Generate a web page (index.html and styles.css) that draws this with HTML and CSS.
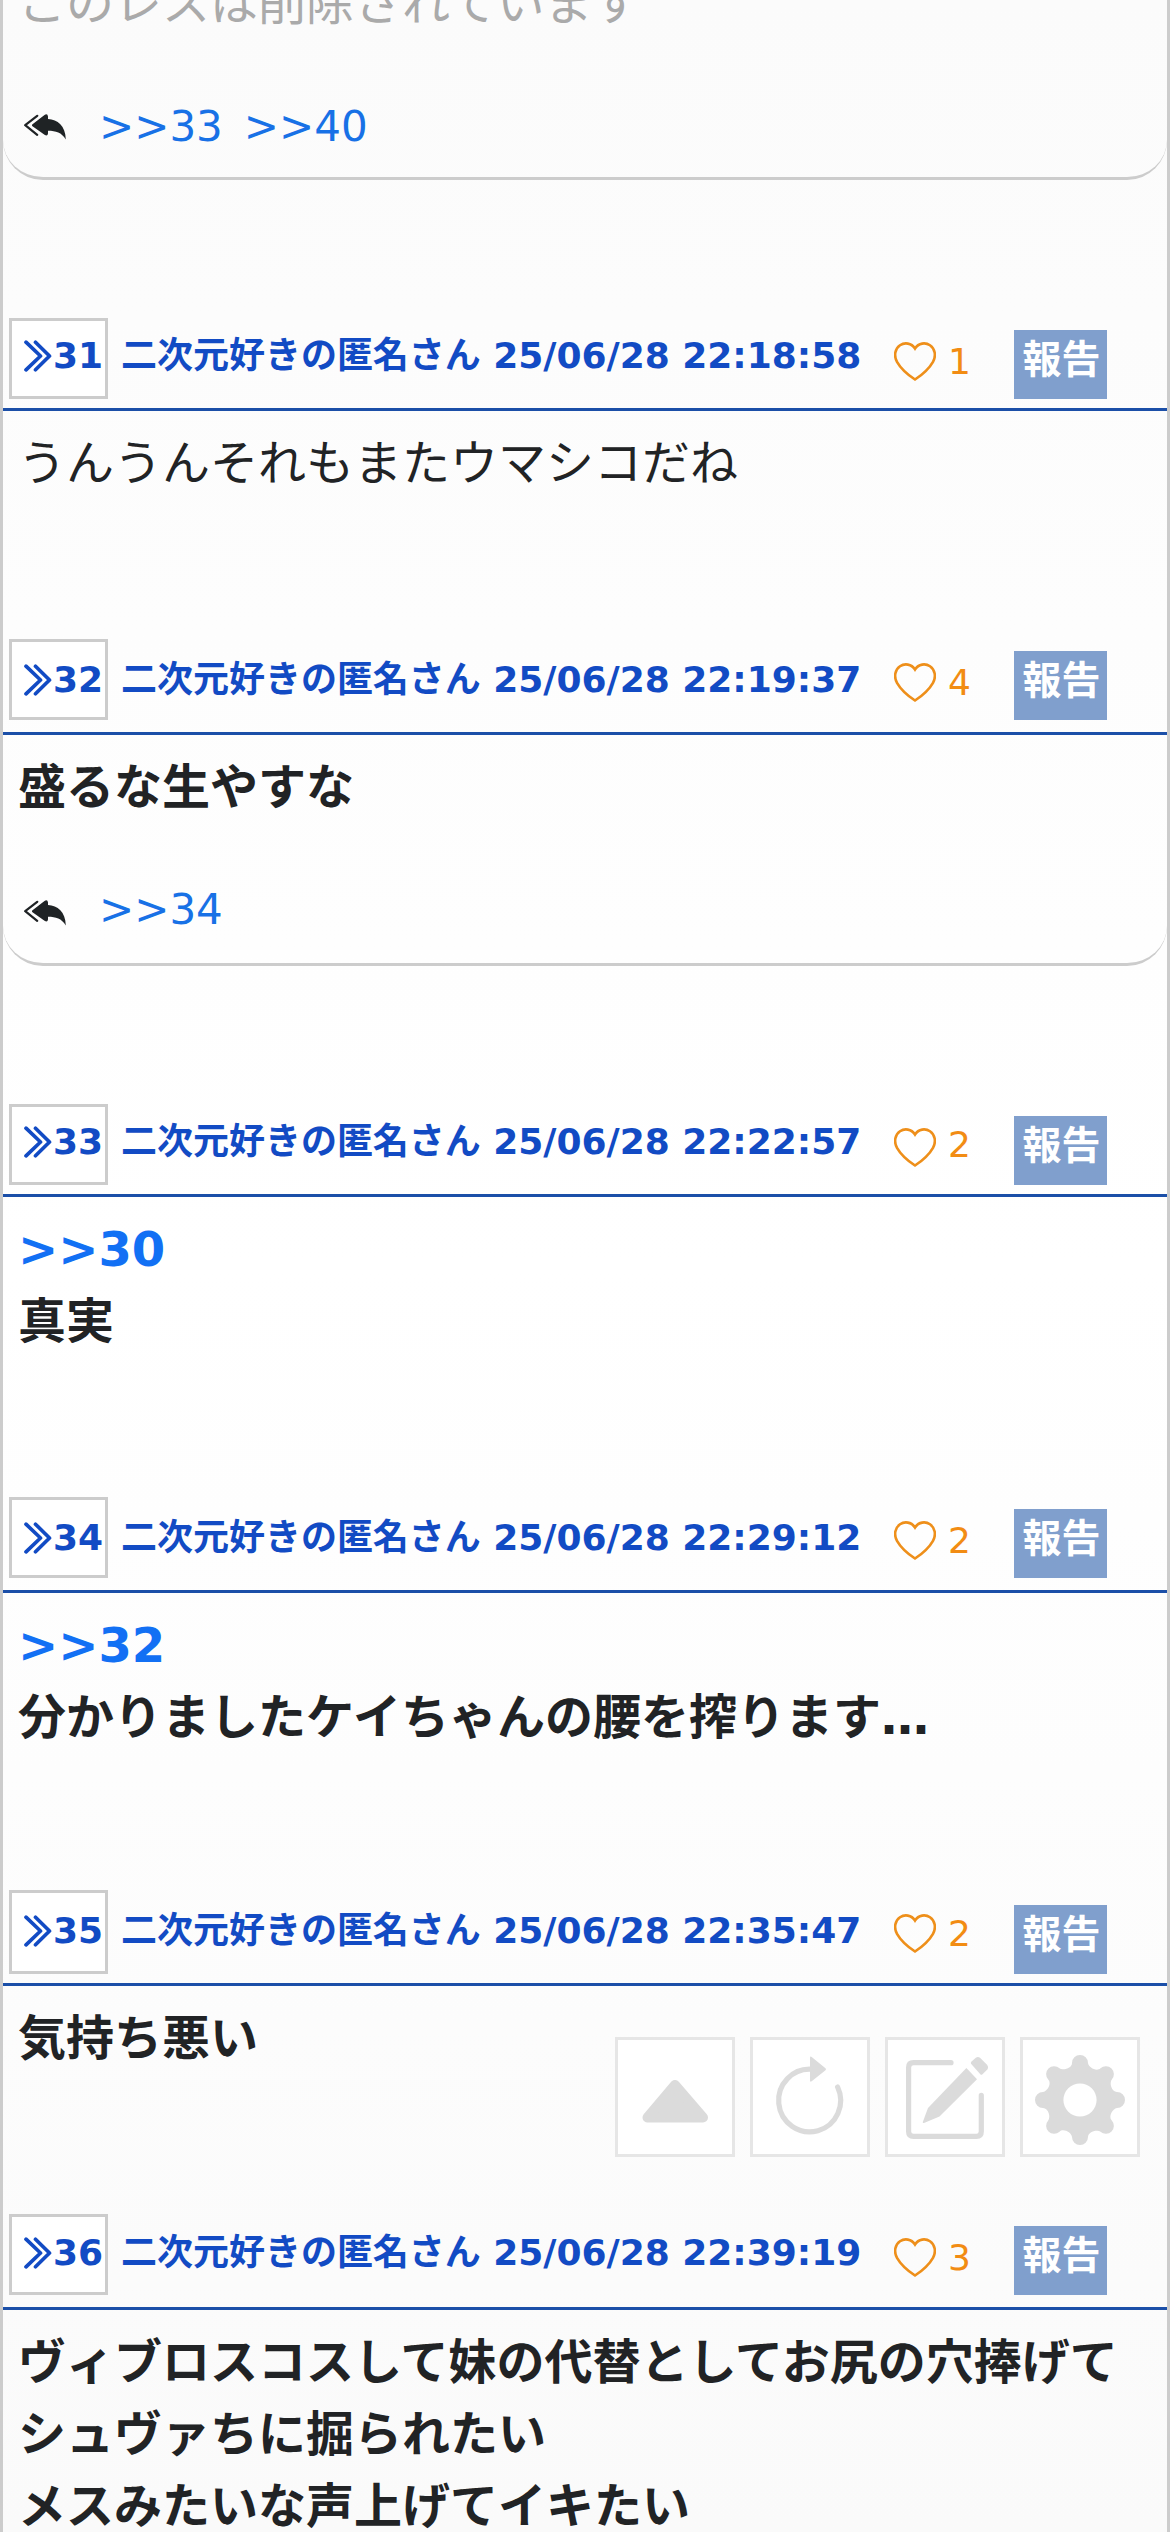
FILE: index.html
```html
<!DOCTYPE html>
<html lang="ja">
<head>
<meta charset="utf-8">
<title>二次元好きの匿名さん</title>
<link rel="stylesheet" href="styles.css">
</head>
<body>
<svg class="sprite" aria-hidden="true">
  <symbol id="chevrons" viewBox="0 0 28 32"><path d="M2 2.200 16.500 16 2 29.800M11.500 2.200 25.500 16 11.500 29.800"/></symbol>
  <symbol id="heart" viewBox="0 0 42 40"><path d="M21 6.500C17.500.8 10.500.2 6 3.300 1 6.800-.4 13.800 3 19.800 6.500 26 13.500 32.500 21 37.500 28.500 32.500 35.500 26 39 19.800 42.400 13.800 41 6.800 36 3.300 31.500.2 24.500.8 21 6.500Z"/></symbol>
  <symbol id="replies" viewBox="0 0 42 26"><path class="thin" d="M13.200 1.800 1.200 11.200 13.200 20.800"/><path d="M8.500 10.300 20.500.9Q23.600-.8 24 2.500V5C33.500 5.500 41.500 11.500 41.800 25.500 37.500 18.500 32 16.800 24 16.800V19.500Q23.600 22.600 20.500 20.800L8.500 12.200Q7.300 11.200 8.500 10.300Z"/></symbol>
</svg>
<main class="thread">
  <article class="post">
    <div class="body deleted">このレスは削除されています</div>
    <footer class="replies first"><svg class="reply-icon"><use href="#replies"/></svg><a>&gt;&gt;33</a><a>&gt;&gt;40</a></footer>
  </article>
  <article class="post">
    <header class="head raised">
      <span class="number"><svg class="chevrons"><use href="#chevrons"/></svg>31</span>
      <span class="name">二次元好きの匿名さん 25/06/28 22:18:58</span>
      <span class="like low-count"><svg class="heart"><use href="#heart"/></svg><span class="count">1</span></span>
      <span class="report">報告</span>
    </header>
    <div class="body plain">うんうんそれもまたウマシコだね</div>
  </article>
  <article class="post">
    <header class="head">
      <span class="number"><svg class="chevrons"><use href="#chevrons"/></svg>32</span>
      <span class="name">二次元好きの匿名さん 25/06/28 22:19:37</span>
      <span class="like"><svg class="heart"><use href="#heart"/></svg><span class="count">4</span></span>
      <span class="report">報告</span>
    </header>
    <div class="body">盛るな生やすな</div>
    <footer class="replies"><svg class="reply-icon"><use href="#replies"/></svg><a>&gt;&gt;34</a></footer>
  </article>
  <article class="post">
    <header class="head raised">
      <span class="number"><svg class="chevrons"><use href="#chevrons"/></svg>33</span>
      <span class="name">二次元好きの匿名さん 25/06/28 22:22:57</span>
      <span class="like"><svg class="heart"><use href="#heart"/></svg><span class="count">2</span></span>
      <span class="report">報告</span>
    </header>
    <div class="body"><a>&gt;&gt;30</a><br>真実</div>
  </article>
  <article class="post">
    <header class="head">
      <span class="number"><svg class="chevrons"><use href="#chevrons"/></svg>34</span>
      <span class="name">二次元好きの匿名さん 25/06/28 22:29:12</span>
      <span class="like"><svg class="heart"><use href="#heart"/></svg><span class="count">2</span></span>
      <span class="report">報告</span>
    </header>
    <div class="body compact"><a>&gt;&gt;32</a><br>分かりましたケイちゃんの腰を搾ります…</div>
  </article>
  <article class="post">
    <header class="head raised tall">
      <span class="number"><svg class="chevrons"><use href="#chevrons"/></svg>35</span>
      <span class="name">二次元好きの匿名さん 25/06/28 22:35:47</span>
      <span class="like"><svg class="heart"><use href="#heart"/></svg><span class="count">2</span></span>
      <span class="report">報告</span>
    </header>
    <div class="body">気持ち悪い</div>
  </article>
  <article class="post">
    <header class="head lifted">
      <span class="number"><svg class="chevrons"><use href="#chevrons"/></svg>36</span>
      <span class="name">二次元好きの匿名さん 25/06/28 22:39:19</span>
      <span class="like"><svg class="heart"><use href="#heart"/></svg><span class="count">3</span></span>
      <span class="report">報告</span>
    </header>
    <div class="body">ヴィブロスコスして妹の代替としてお尻の穴捧げて<br>シュヴァちに掘られたい<br>メスみたいな声上げてイキたい</div>
  </article>
</main>
<nav class="tools">
  <button class="tool" aria-label="上へ"><svg viewBox="0 0 120 120"><path class="tri" d="M60 48 32.500 80.500H88Z"/></svg></button>
  <button class="tool" aria-label="更新"><svg viewBox="0 0 120 120"><path class="line" d="M62 32.300A31 31.300 0 1 0 87.600 50"/><path d="M60 21Q60 18.500 62 20.200L75.500 31.200Q76.500 32.200 75.500 33.200L62 44Q60 45.500 60 43.500Z"/></svg></button>
  <button class="tool" aria-label="書き込む"><svg viewBox="0 0 120 120"><path class="line" d="M66 25.700H28.500Q23.600 25.700 23.600 30.500V94.500Q23.600 99.300 28.500 99.300H91.500Q96.300 99.300 96.300 94.500V58.300"/><path d="M81.400 31 92 42.300 54.500 79.500 39 86Q37.300 86.500 37.900 84.700L43 71Z"/><path d="M86 26.800Q85.500 25.800 86.300 24.800L90.800 20.700Q93 19.200 95 20.700L102 27.800Q104 30.300 102.300 32.500L97.500 37.200Q96.300 38.200 95.300 37.200Z"/></svg></button>
  <button class="tool" aria-label="設定"><svg viewBox="-60 -63 120 120"><path fill-rule="evenodd" d="M-8-37A8 8 0 0 1 8-37C8.500-32.500 16.800-28 20.500-31.800A8 8 0 0 1 31.800-20.500C29-17 31.700-7.900 37-8A8 8 0 0 1 37 8C32.500 8.500 28 16.800 31.800 20.500A8 8 0 0 1 20.500 31.800C17 29 7.900 31.700 8 37A8 8 0 0 1-8 37C-8.500 32.500-16.800 28-20.500 31.800A8 8 0 0 1-31.800 20.500C-29 17-31.700 7.900-37 8A8 8 0 0 1-37-8C-32.500-8.500-28-16.800-31.800-20.500A8 8 0 0 1-20.500-31.800C-17-29-7.900-31.700-8-37ZM0-16.600A16.600 16.600 0 1 0 0 16.600 16.600 16.600 0 1 0 0-16.600Z"/></svg></button>
</nav>
</body>
</html>
```
FILE: styles.css
```css
* { box-sizing: border-box; }
body {
  margin: 0;
  font-family: "DejaVu Sans", "Noto Sans CJK JP", sans-serif;
  color: #212325;
}
.sprite { display: none; }
.thread {
  display: flex;
  flex-direction: column;
  gap: 135px;
  height: 2532px;
  overflow: hidden;
  border: solid #ccc;
  border-width: 0 3px;
  background: linear-gradient(#fbfbfb, #fff 50%, #fafafa);
}
.post { flex: none; }
.head {
  --drop: 0px;
  --lift: 0px;
  display: flex;
  align-items: flex-start;
  height: 96px;
  padding-left: 6px;
  border-bottom: 3px solid #1b4fa8;
  font-size: 36px;
  line-height: 54px;
  white-space: nowrap;
  color: #124bc4;
}
.raised { --drop: 3px; }
.lifted { --lift: 2px; }
.number {
  display: flex;
  width: 99px;
  height: 81px;
  margin-top: var(--drop);
  padding: calc(11px - var(--drop) - var(--lift)) 0 0 12px;
  border: 3px solid #ccc;
  background: #fff;
  font-weight: bold;
}
.tall .number { height: 84px; margin-top: 0; padding-top: 11px; }
.chevrons {
  flex: none;
  width: 28px;
  height: 32px;
  margin: 11px 1px 0 0;
  fill: none;
  stroke: #124bc4;
  stroke-width: 3.7;
  stroke-linecap: round;
  stroke-linejoin: round;
}
.name {
  width: 737px;
  margin-left: 13px;
  padding-top: calc(14px - var(--lift));
  font-weight: bold;
  letter-spacing: -0.02px;
}
.like {
  display: flex;
  align-items: flex-start;
  gap: 12px;
  width: 120px;
  margin-left: 36px;
  padding-top: 17px;
  color: #f28c13;
}
.heart { flex: none; width: 42px; height: 40px; margin-top: 7px; fill: none; stroke: #ee8f1a; stroke-width: 2.6; }
.raised:not(.tall) .heart { margin-top: 10px; }
.low-count .count { padding-top: 3px; }
.report {
  width: 93px;
  height: 69px;
  margin-top: calc(12px + var(--drop));
  padding-left: 2px;
  background: #809fcd;
  color: #fff;
  font-size: 39px;
  font-weight: bold;
  line-height: 60px;
  text-align: center;
}
.body {
  padding: 16px 15px 5px;
  font-size: 48px;
  font-weight: bold;
  line-height: 72px;
}
.plain { font-weight: normal; }
.compact { padding-bottom: 2px; }
.deleted { margin-top: -49px; padding-bottom: 0; font-weight: normal; color: #aaa; }
.body a { color: #1270f4; }
.replies {
  display: flex;
  align-items: center;
  height: 138px;
  padding: 27px 0 0 21px;
  border-bottom: 3px solid #ccc;
  border-radius: 0 0 40px 40px;
  font-size: 42px;
  line-height: 63px;
  color: #1871e6;
}
.replies.first { height: 141px; padding-top: 36px; }
.reply-icon { flex: none; width: 42px; height: 26px; margin: 8px 33px 0 0; fill: #1f2325; }
.first .reply-icon { margin-top: 1px; }
.thin { fill: none; stroke: #1f2325; stroke-width: 2.2; stroke-linecap: round; stroke-linejoin: round; }
.replies a { margin-right: 21px; }
.tools { position: fixed; top: 2037px; right: 30px; display: flex; gap: 15px; }
.tool { width: 120px; height: 120px; padding: 0; border: 3px solid #e6e6e6; background: #fff; }
.tool svg { display: block; width: 120px; height: 120px; margin: -3px; fill: #dbdbdb; }
.tool .line { fill: none; stroke: #dbdbdb; stroke-width: 5.2; stroke-linecap: round; }
.tool .tri { stroke: #dbdbdb; stroke-width: 10; stroke-linejoin: round; }
```
